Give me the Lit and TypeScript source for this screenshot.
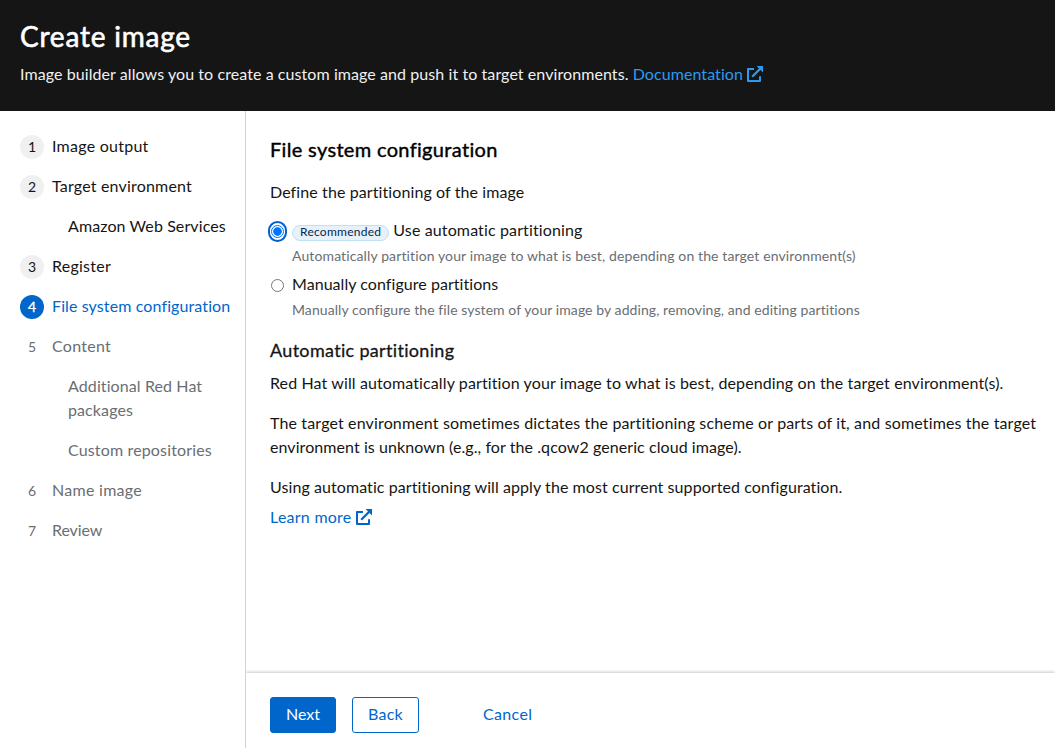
import { LitElement, html, css, svg } from "lit";
import { customElement } from "lit/decorators.js";
import { classMap } from "lit/directives/class-map.js";

interface Step {
  label: string;
  n?: number;
  state?: "current" | "disabled";
  tracking: number;
}

const STEPS: Step[] = [
  { n: 1, label: "Image output", tracking: 0.25 },
  { n: 2, label: "Target environment", tracking: 0.19 },
  { label: "Amazon Web Services", tracking: 0.1 },
  { n: 3, label: "Register", tracking: 0.25 },
  { n: 4, label: "File system configuration", state: "current", tracking: 0.11 },
  { n: 5, label: "Content", state: "disabled", tracking: 0.27 },
  { label: "Additional Red Hat packages", state: "disabled", tracking: 0.1 },
  { label: "Custom repositories", state: "disabled", tracking: 0.15 },
  { n: 6, label: "Name image", state: "disabled", tracking: 0.28 },
  { n: 7, label: "Review", state: "disabled", tracking: -0.08 },
];

const externalIcon = html`<svg class="ext" viewBox="0 0 16 16" aria-hidden="true">
  ${svg`<path d="M7 3H1V15H13V10.2" fill="none" stroke="currentColor" stroke-width="2" stroke-linejoin="round"/>
  <path d="M5.2 10.8L13.2 2.8" fill="none" stroke="currentColor" stroke-width="2.3"/>
  <path d="M9.6 0H16V6.4Z" fill="currentColor"/>`}
</svg>`;

@customElement("app-root")
export class AppRoot extends LitElement {
  static styles = css`
    :host {
      display: flex;
      flex-direction: column;
      height: 100vh;
      overflow: hidden;
      background: #fff;
      color: #151515;
      font: 16px/24px Lato, "Liberation Sans", sans-serif;
      font-variant-ligatures: none;
      letter-spacing: 0.1px;
      white-space: nowrap;
    }
    * { box-sizing: border-box; }
    h1, h2, h3, p, ol { margin: 0; padding: 0; font-weight: 400; }
    header {
      flex: none;
      height: 111px;
      padding: 18px 20px 0;
      background: #151515;
      color: #fff;
    }
    h1 {
      font-size: 28px;
      line-height: 36px;
      letter-spacing: 0.79px;
      -webkit-text-stroke: 0.6px currentColor;
    }
    .desc { margin-top: 8px; color: #f0f0f0; letter-spacing: 0.078px; }
    a { color: #06c; letter-spacing: 0.25px; }
    .desc a { color: #2b9af3; letter-spacing: 0.08px; }
    .ext { width: 16px; height: 16px; vertical-align: -2px; }
    .desc .ext { margin-left: -0.6px; }
    .body { flex: 1; display: flex; min-height: 0; }
    nav { flex: none; width: 246px; border-right: 1px solid #d2d2d2; padding: 23px 12px 0 20px; }
    ol { list-style: none; display: flex; flex-direction: column; gap: 16px; }
    li { display: flex; gap: 8px; }
    .sub { padding-left: 48px; white-space: normal; }
    .num {
      flex: none;
      width: 24px;
      height: 24px;
      margin: 1px 0 -1px;
      border-radius: 50%;
      background: #f0f0f0;
      font-size: 14px;
      letter-spacing: 0;
      text-align: center;
    }
    .disabled { color: #6a6e73; }
    .disabled .num { background: none; }
    .current { color: #06c; }
    .current .num { background: #06c; color: #fff; -webkit-text-stroke: 0.3px #fff; }
    .right { flex: 1; display: flex; flex-direction: column; min-width: 0; }
    main { flex: 1; padding: 23px 0 0 24px; }
    h2 {
      color: #000;
      font-size: 20px;
      line-height: 30px;
      letter-spacing: 0.33px;
      -webkit-text-stroke: 0.4px currentColor;
    }
    .lead { margin-top: 16px; }
    .option { display: grid; grid-template-columns: 15px 1fr; column-gap: 7px; }
    .options { margin-top: 14px; display: grid; row-gap: 5px; }
    .option .label { display: flex; align-items: center; gap: 4px; height: 24px; }
    .dot {
      width: 13px;
      height: 13px;
      margin: 7px 1px 0;
      border: 1px solid #767676;
      border-radius: 50%;
    }
    .dot.on {
      position: relative;
      border: 1px solid #0075ff;
      background: radial-gradient(circle, #0075ff 0 3.9px, #fff 4.6px);
    }
    .dot.on::after {
      content: "";
      position: absolute;
      inset: -5px -4px;
      border: 2px solid #0060d0;
      border-radius: 9.5px;
    }
    .badge {
      height: 16px;
      margin-top: 5px;
      padding: 0 7px;
      border: 1px solid #bee1f4;
      border-radius: 8px;
      background: #e7f1fa;
      color: #002952;
      font-size: 12px;
      line-height: 12px;
      letter-spacing: 0.26px;
    }
    .auto { letter-spacing: 0.13px; }
    .manual { letter-spacing: 0.05px; }
    .help {
      grid-column: 2;
      margin-top: 2px;
      color: #6a6e73;
      font-size: 14px;
      line-height: 23px;
      letter-spacing: 0.118px;
    }
    .help.m { letter-spacing: 0.078px; }
    h3 {
      margin-top: 17px;
      font-size: 18px;
      line-height: 24px;
      letter-spacing: 0.32px;
      -webkit-text-stroke: 0.3px currentColor;
    }
    .p1 { margin-top: 9px; letter-spacing: 0.115px; }
    .p2 { margin-top: 16px; letter-spacing: 0.145px; }
    .p2 span { letter-spacing: 0.075px; }
    .p3 { margin-top: 16px; letter-spacing: 0.08px; }
    .more { margin-top: 6px; }
    footer {
      flex: none;
      height: 75px;
      padding: 24px 24px 0;
      display: flex;
      align-items: flex-start;
      background: #fff;
      box-shadow: 0 -1px 3px rgba(3, 3, 3, 0.22);
      clip-path: inset(-8px 0 0 0);
    }
    button {
      height: 36px;
      padding: 0 0 2px;
      border: 1px solid #06c;
      border-radius: 3px;
      background: #fff;
      color: #06c;
      font: inherit;
      letter-spacing: 0.25px;
    }
    .next { width: 66px; background: #06c; color: #fff; letter-spacing: 0; }
    .back { width: 67px; margin-left: 16px; }
    .cancel { margin-left: 64px; border: 0; letter-spacing: 0.33px; }
  `;

  render() {
    return html`
      <header>
        <h1>Create image</h1>
        <p class="desc">Image builder allows you to create a custom image and push it to target environments. <a>Documentation ${externalIcon}</a></p>
      </header>
      <div class="body">
        <nav>
          <ol>
            ${STEPS.map((s) => html`<li
              class=${classMap({ sub: !s.n, current: s.state === "current", disabled: s.state === "disabled" })}
              style="letter-spacing:${s.tracking}px"
            >${s.n ? html`<span class="num">${s.n}</span>` : ""}<span>${s.label}</span></li>`)}
          </ol>
        </nav>
        <div class="right">
          <main>
            <h2>File system configuration</h2>
            <p class="lead">Define the partitioning of the image</p>
            <div class="options">
              <div class="option">
                <span class="dot on"></span>
                <div class="label"><span class="badge">Recommended</span><span class="auto">Use automatic partitioning</span></div>
                <div class="help">Automatically partition your image to what is best, depending on the target environment(s)</div>
              </div>
              <div class="option">
                <span class="dot"></span>
                <div class="label manual">Manually configure partitions</div>
                <div class="help m">Manually configure the file system of your image by adding, removing, and editing partitions</div>
              </div>
            </div>
            <h3>Automatic partitioning</h3>
            <p class="p1">Red Hat will automatically partition your image to what is best, depending on the target environment(s).</p>
            <p class="p2">The target environment sometimes dictates the partitioning scheme or parts of it, and sometimes the target<br /><span>environment is unknown (e.g., for the .qcow2 generic cloud image).</span></p>
            <p class="p3">Using automatic partitioning will apply the most current supported configuration.</p>
            <p class="more"><a>Learn more ${externalIcon}</a></p>
          </main>
          <footer>
            <button class="next">Next</button>
            <button class="back">Back</button>
            <button class="cancel">Cancel</button>
          </footer>
        </div>
      </div>
    `;
  }
}
